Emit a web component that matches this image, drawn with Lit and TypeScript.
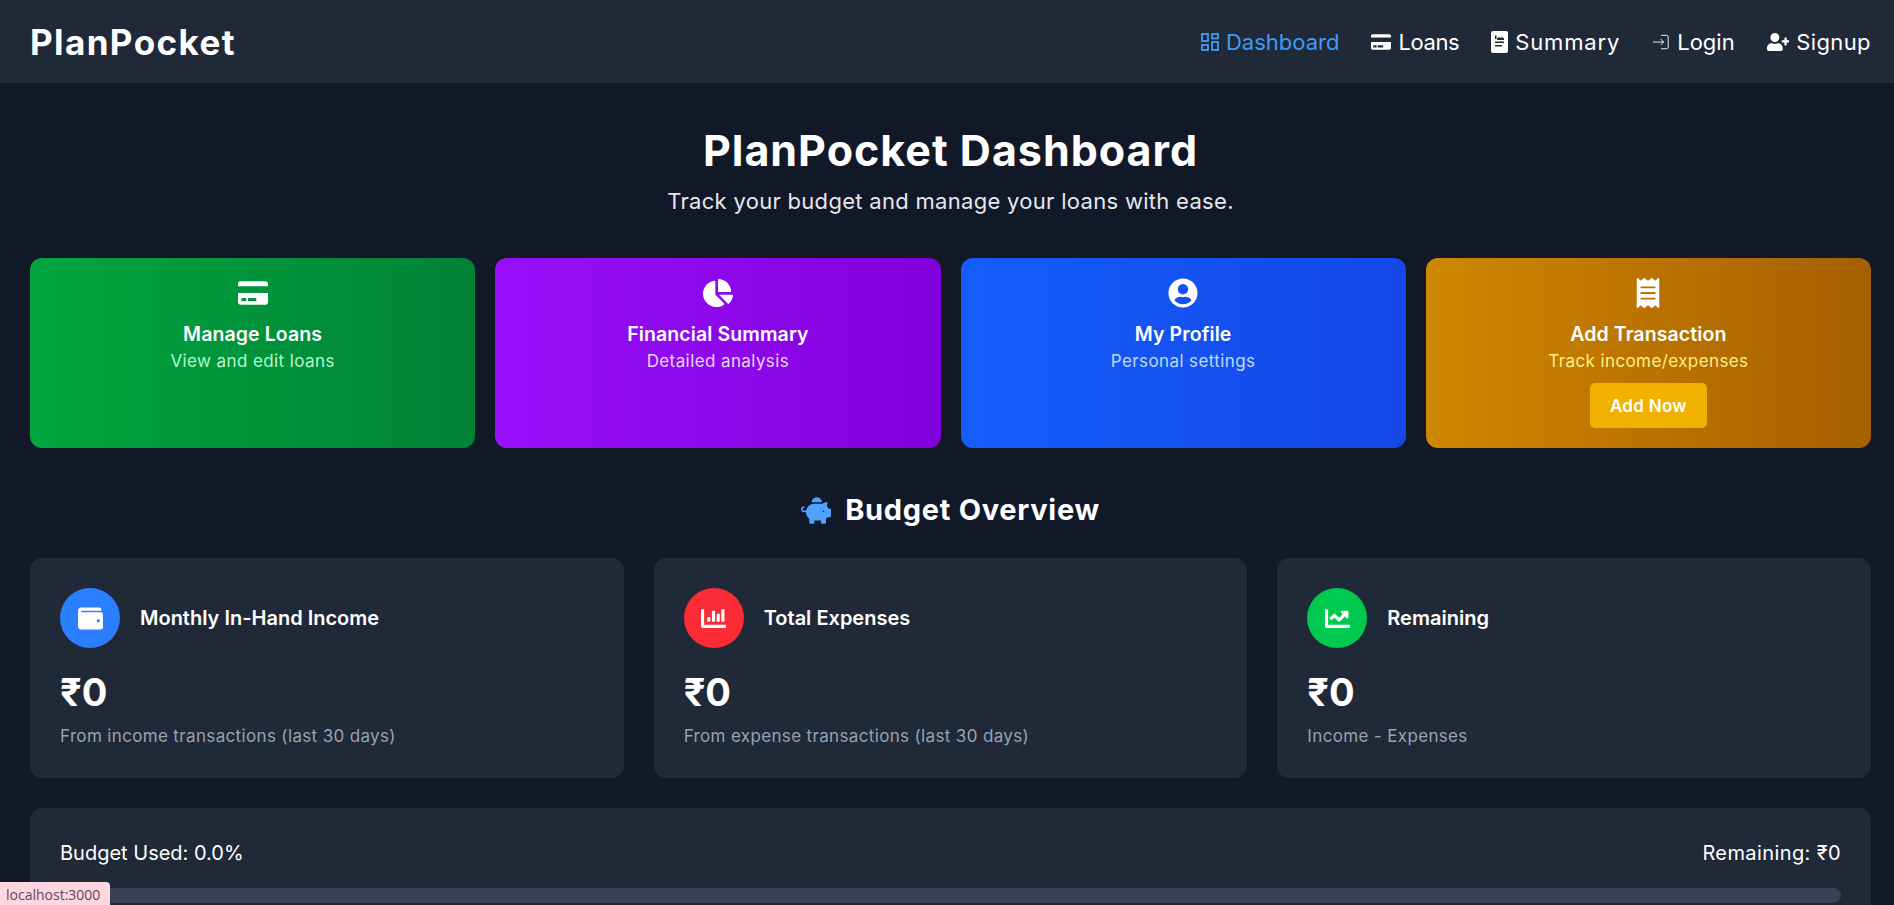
import { LitElement, html, css, svg } from "lit";
import { customElement } from "lit/decorators.js";

const P = {
  card: "M0 432c0 26.5 21.5 48 48 48h480c26.5 0 48-21.5 48-48V256H0v176zm192-68c0-6.6 5.4-12 12-12h136c6.6 0 12 5.4 12 12v40c0 6.6-5.4 12-12 12H204c-6.6 0-12-5.4-12-12v-40zm-128 0c0-6.6 5.4-12 12-12h72c6.6 0 12 5.4 12 12v40c0 6.6-5.4 12-12 12H76c-6.6 0-12-5.4-12-12v-40zM576 80v48H0V80c0-26.5 21.5-48 48-48h480c26.5 0 48 21.5 48 48z",
  pie: "M527.79 288H290.5l158.03 158.03c6.04 6.04 15.98 6.53 22.19.68 38.7-36.46 65.32-85.61 73.13-140.86 1.34-9.46-6.51-17.85-16.06-17.85zm-15.83-64.8C503.72 103.74 408.26 8.28 288.8.04 279.68-.59 272 7.1 272 16.24V240h223.77c9.14 0 16.82-7.68 16.19-16.8zM224 288V50.71c0-9.55-8.39-17.4-17.84-16.06C86.99 51.49-4.1 155.6.14 280.37 4.5 408.51 114.83 513.59 243.03 511.98c50.4-.63 96.97-16.87 135.26-44.03 7.9-5.6 8.42-17.23 1.57-24.08L224 288z",
  user: "M248 8C111 8 0 119 0 256s111 248 248 248 248-111 248-248S385 8 248 8zm0 96c48.6 0 88 39.4 88 88s-39.4 88-88 88-88-39.4-88-88 39.4-88 88-88zm0 344c-58.7 0-111.3-26.6-146.5-68.2 18.8-35.4 55.6-59.8 98.5-59.8 2.4 0 4.8.4 7.1 1.1 13 4.2 26.6 6.9 40.9 6.9 14.3 0 28-2.7 40.9-6.9 2.3-.7 4.7-1.1 7.1-1.1 42.9 0 79.7 24.4 98.5 59.8C359.3 421.4 306.7 448 248 448z",
  receipt: "M358.4 3.2L320 48 265.6 3.2a15.9 15.9 0 0 0-19.2 0L192 48 137.6 3.2a15.9 15.9 0 0 0-19.2 0L64 48 25.6 3.2C15-4.7 0 2.8 0 16v480c0 13.2 15 20.7 25.6 12.8L64 464l54.4 44.8a15.9 15.9 0 0 0 19.2 0L192 464l54.4 44.8a15.9 15.9 0 0 0 19.2 0L320 464l38.4 44.8c10.5 7.9 25.6.4 25.6-12.8V16c0-13.2-15-20.7-25.6-12.8zM320 360c0 4.4-3.6 8-8 8H72c-4.4 0-8-3.6-8-8v-16c0-4.4 3.6-8 8-8h240c4.4 0 8 3.6 8 8v16zm0-96c0 4.4-3.6 8-8 8H72c-4.4 0-8-3.6-8-8v-16c0-4.4 3.6-8 8-8h240c4.4 0 8 3.6 8 8v16zm0-96c0 4.4-3.6 8-8 8H72c-4.4 0-8-3.6-8-8v-16c0-4.4 3.6-8 8-8h240c4.4 0 8 3.6 8 8v16z",
  piggy: "M560 224h-29.5c-8.8-20-21.6-37.7-37.4-52.5L512 96h-32c-29.4 0-55.4 13.5-73 34.3-7.6-1.1-15.1-2.3-23-2.3H256c-77.4 0-141.9 55-156.8 128H56c-14.8 0-26.5-13.5-23.5-28.8C34.7 215.8 45.4 208 57 208h1c3.3 0 6-2.7 6-6v-20c0-3.3-2.7-6-6-6-28.5 0-53.9 20.4-57.5 48.6C-3.9 258.8 22.7 288 56 288h40c0 52.2 25.4 98.1 64 127.3V496c0 8.8 7.2 16 16 16h64c8.8 0 16-7.2 16-16v-48h128v48c0 8.8 7.2 16 16 16h64c8.8 0 16-7.2 16-16v-80.7c11.8-8.9 22.3-19.4 31.3-31.3H560c8.8 0 16-7.2 16-16V240c0-8.8-7.2-16-16-16zm-128 64c-8.8 0-16-7.2-16-16s7.2-16 16-16 16 7.2 16 16-7.2 16-16 16zM256 96h128c5.4 0 10.7.4 15.9.8 0-.3.1-.5.1-.8 0-53-43-96-96-96s-96 43-96 96c0 2.1.5 4.1.6 6.2 15.2-3.9 31-6.2 47.4-6.2z",
  wallet: "M461.2 128H80c-8.84 0-16-7.16-16-16s7.16-16 16-16h384c8.84 0 16-7.16 16-16 0-26.51-21.49-48-48-48H64C28.65 32 0 60.65 0 96v320c0 35.35 28.65 64 64 64h397.2c28.02 0 50.8-21.53 50.8-48V176c0-26.47-22.78-48-50.8-48zM416 336c-17.67 0-32-14.33-32-32s14.33-32 32-32 32 14.33 32 32-14.33 32-32 32z",
  bar: "M332.8 320h38.4c6.4 0 12.8-6.4 12.8-12.8V172.8c0-6.4-6.4-12.8-12.8-12.8h-38.4c-6.4 0-12.8 6.4-12.8 12.8v134.4c0 6.4 6.4 12.8 12.8 12.8zm96 0h38.4c6.4 0 12.8-6.4 12.8-12.8V76.8c0-6.4-6.4-12.8-12.8-12.8h-38.4c-6.4 0-12.8 6.4-12.8 12.8v230.4c0 6.4 6.4 12.8 12.8 12.8zm-288 0h38.4c6.4 0 12.8-6.4 12.8-12.8v-70.4c0-6.4-6.4-12.8-12.8-12.8h-38.4c-6.4 0-12.8 6.4-12.8 12.8v70.4c0 6.4 6.4 12.8 12.8 12.8zm96 0h38.4c6.4 0 12.8-6.4 12.8-12.8V108.8c0-6.4-6.4-12.8-12.8-12.8h-38.4c-6.4 0-12.8 6.4-12.8 12.8v198.4c0 6.4 6.4 12.8 12.8 12.8zM496 384H64V80c0-8.84-7.16-16-16-16H16C7.16 64 0 71.16 0 80v336c0 17.67 14.33 32 32 32h464c8.84 0 16-7.16 16-16v-32c0-8.84-7.16-16-16-16z",
  line: "M496 384H64V80c0-8.84-7.16-16-16-16H16C7.16 64 0 71.16 0 80v336c0 17.67 14.33 32 32 32h464c8.84 0 16-7.16 16-16v-32c0-8.84-7.16-16-16-16zM464 96H345.94c-21.38 0-32.09 25.85-16.97 40.97l32.4 32.4L288 242.75l-73.37-73.37c-12.5-12.5-32.76-12.5-45.25 0l-68.69 68.69c-6.25 6.25-6.25 16.38 0 22.63l22.62 22.62c6.25 6.25 16.38 6.25 22.63 0L192 237.25l73.37 73.37c12.5 12.5 32.76 12.5 45.25 0l96-96 32.4 32.4c15.12 15.12 40.97 4.41 40.97-16.97V112c.01-8.84-7.15-16-15.99-16z",
  userPlus: "M624 208h-64v-64c0-8.8-7.2-16-16-16h-32c-8.8 0-16 7.2-16 16v64h-64c-8.8 0-16 7.2-16 16v32c0 8.8 7.2 16 16 16h64v64c0 8.8 7.2 16 16 16h32c8.8 0 16-7.2 16-16v-64h64c8.8 0 16-7.2 16-16v-32c0-8.8-7.2-16-16-16zm-400 48c70.7 0 128-57.3 128-128S294.7 0 224 0 96 57.3 96 128s57.3 128 128 128zm89.6 32h-16.7c-22.2 10.2-46.9 16-72.9 16s-50.6-5.8-72.9-16h-16.7C60.2 288 0 348.2 0 422.4V464c0 26.5 21.5 48 48 48h352c26.5 0 48-21.5 48-48v-41.6c0-74.2-60.2-134.4-134.4-134.4z",
  invoice: "M2 0h13a2 2 0 0 1 2 2v18a2 2 0 0 1-2 2H2a2 2 0 0 1-2-2V2a2 2 0 0 1 2-2zM4 4.500v3.500h1.500V4.500H4zM6 9h7V7.500L11 6 9.500 7 8 6 6 7.500V9zM4 10.500V12h9v-1.500H4zM4 14v1.500h7V14H4z",
};

const icon = (d: string, w: number, h: number, cls = "") =>
  svg`<svg class=${cls} viewBox="0 0 ${w} ${h}" fill="currentColor"><path fill-rule="evenodd" d=${d}></path></svg>`;

@customElement("app-root")
export class AppRoot extends LitElement {
  static styles = css`
    :host {
      display: block;
      height: 905px;
      overflow: hidden;
      position: relative;
      background: #111827;
      color: #fff;
      font-family: Inter, "Noto Sans", "DejaVu Sans", sans-serif;
    }
    header {
      height: 83px;
      background: #1f2937;
      display: flex;
      align-items: center;
      justify-content: space-between;
      padding: 0 23px 0 30px;
      box-sizing: border-box;
    }
    .logo { font-size: 35px; font-weight: 700; letter-spacing: 1.4px; }
    nav { display: flex; align-items: center; gap: 32px; }
    nav a { display: flex; align-items: center; gap: 7px; font-size: 22px; font-weight: 400; white-space: nowrap; }
    nav a.active { color: #4299f5; }
    nav a.loans { letter-spacing: -0.4px; }
    nav a.summary { letter-spacing: 0.85px; }
    nav a.signup { letter-spacing: 0.4px; }
    nav svg { height: 18px; width: auto; display: block; flex: none; }
    nav svg.doc { height: 22px; width: 17px; }
    nav svg.cc { height: 18px; width: 20px; }
    main { padding: 30px 23px 30px 30px; }
    .hero { text-align: center; margin-bottom: 41px; }
    h1 { margin: 7px 0 0; font-size: 43px; line-height: 60px; font-weight: 700; letter-spacing: 1px; }
    .hero p { margin: 6px 0 0; font-size: 22px; line-height: 30px; letter-spacing: 0.3px; color: #e5e7eb; padding-bottom: 1px; }
    .actions { display: grid; grid-template-columns: repeat(4, 1fr); gap: 20px; }
    .action {
      height: 190px;
      border-radius: 12px;
      box-sizing: border-box;
      padding: 20px;
      display: flex;
      flex-direction: column;
      align-items: center;
      text-align: center;
    }
    .action svg { height: 30px; width: 30px; display: block; flex: none; }
    .action h3 { margin: 12.5px 0 0; font-size: 19.5px; line-height: 27px; font-weight: 600; letter-spacing: 0.1px; }
    .action p { margin: 1.5px 0 0; font-size: 17px; line-height: 24px; letter-spacing: 0.4px; }
    .green { background: linear-gradient(90deg, #00a63e, #008236); }
    .green p { color: #b9f8cf; }
    .purple { background: linear-gradient(90deg, #9810fa, #8200db); }
    .purple p { color: #e9d4ff; }
    .blue { background: linear-gradient(90deg, #155dfc, #1447e6); }
    .blue p { color: #bedbff; }
    .amber { background: linear-gradient(90deg, #d08700, #a65f00); }
    .amber p { color: #fff085; }
    .btn {
      margin-top: 10px;
      width: 117px;
      height: 45px;
      display: flex;
      align-items: center;
      justify-content: center;
      background: #f0b100;
      border-radius: 5px;
      font-size: 17px;
      font-weight: 600;
      letter-spacing: 0.3px;
    }
    h2 {
      margin: 41px 0 27px;
      display: flex;
      justify-content: center;
      align-items: center;
      gap: 14px;
      font-size: 29px;
      line-height: 42px;
      font-weight: 700;
      letter-spacing: 0.7px;
    }
    h2 svg { width: 30px; height: 27px; color: #51a2ff; }
    .stats { display: grid; grid-template-columns: repeat(3, 1fr); gap: 30px; }
    .stat { background: #1f2937; border-radius: 12px; padding: 30px; height: 220px; box-sizing: border-box; }
    .stat-head { display: flex; align-items: center; gap: 20px; }
    .circle { width: 60px; height: 60px; border-radius: 50%; display: flex; align-items: center; justify-content: center; flex: none; }
    .circle svg { width: 25px; height: 25px; }
    .c-blue { background: #2b7fff; }
    .c-red { background: #fb2c36; }
    .c-green { background: #00c950; }
    .stat-head span { font-size: 20px; font-weight: 600; }
    .value { margin-top: 22px; font-size: 38px; line-height: 44px; font-weight: 700; }
    .note { margin-top: 10px; font-size: 17px; line-height: 24px; letter-spacing: 0.35px; color: #99a1af; }
    .budget { margin-top: 30px; background: #1f2937; border-radius: 12px; padding: 30px; }
    .budget-row { display: flex; justify-content: space-between; font-size: 20px; line-height: 30px; margin-bottom: 20px; }
    .budget-row .right { letter-spacing: 0.4px; }
    .track { height: 15px; border-radius: 8px; background: #364153; }
    .status {
      position: absolute;
      left: 0;
      bottom: 0;
      height: 23px;
      width: 110px;
      box-sizing: border-box;
      padding-left: 6px;
      background: #ffd6e0;
      border-top-right-radius: 4px;
      color: #5b4a5e;
      font-family: "Open Sans", "Noto Sans", sans-serif;
      font-size: 14px;
      line-height: 26px;
      white-space: nowrap;
      overflow: hidden;
    }
  `;

  render() {
    return html`
      <header>
        <div class="logo">PlanPocket</div>
        <nav>
          <a class="active">
            <svg viewBox="0 0 18 18" fill="none" stroke="currentColor" stroke-width="1.800">
              <rect x="1" y="1" width="6" height="7"></rect>
              <rect x="11" y="1" width="6" height="4.500"></rect>
              <rect x="1" y="12" width="6" height="5"></rect>
              <rect x="11" y="9" width="6" height="8"></rect>
            </svg>
            Dashboard
          </a>
          <a class="loans">${icon(P.card, 576, 512, "cc")} Loans</a>
          <a class="summary">${icon(P.invoice, 17, 22, "doc")} Summary</a>
          <a>
            <svg viewBox="0 0 20 20" fill="none" stroke="currentColor" stroke-width="1">
              <path d="M1 10h12M9.500 6.500 13 10l-3.500 3.500"></path>
              <path d="M10 2.500h6a2 2 0 0 1 2 2v11a2 2 0 0 1-2 2h-6"></path>
            </svg>
            Login
          </a>
          <a class="signup">${icon(P.userPlus, 640, 512)} Signup</a>
        </nav>
      </header>
      <main>
        <section class="hero">
          <h1>PlanPocket Dashboard</h1>
          <p>Track your budget and manage your loans with ease.</p>
        </section>
        <section class="actions">
          <div class="action green">${icon(P.card, 576, 512)}<h3>Manage Loans</h3><p>View and edit loans</p></div>
          <div class="action purple">${icon(P.pie, 544, 512)}<h3>Financial Summary</h3><p>Detailed analysis</p></div>
          <div class="action blue">${icon(P.user, 496, 512)}<h3>My Profile</h3><p>Personal settings</p></div>
          <div class="action amber">${icon(P.receipt, 384, 512)}<h3>Add Transaction</h3><p>Track income/expenses</p><div class="btn">Add Now</div></div>
        </section>
        <h2>${icon(P.piggy, 576, 512)} Budget Overview</h2>
        <section class="stats">
          <div class="stat">
            <div class="stat-head"><div class="circle c-blue">${icon(P.wallet, 512, 512)}</div><span>Monthly In-Hand Income</span></div>
            <div class="value">₹0</div>
            <div class="note">From income transactions (last 30 days)</div>
          </div>
          <div class="stat">
            <div class="stat-head"><div class="circle c-red">${icon(P.bar, 512, 512)}</div><span>Total Expenses</span></div>
            <div class="value">₹0</div>
            <div class="note">From expense transactions (last 30 days)</div>
          </div>
          <div class="stat">
            <div class="stat-head"><div class="circle c-green">${icon(P.line, 512, 512)}</div><span>Remaining</span></div>
            <div class="value">₹0</div>
            <div class="note">Income - Expenses</div>
          </div>
        </section>
        <section class="budget">
          <div class="budget-row"><span>Budget Used: 0.0%</span><span class="right">Remaining: ₹0</span></div>
          <div class="track"></div>
        </section>
      </main>
      <div class="status">localhost:3000</div>
    `;
  }
}
